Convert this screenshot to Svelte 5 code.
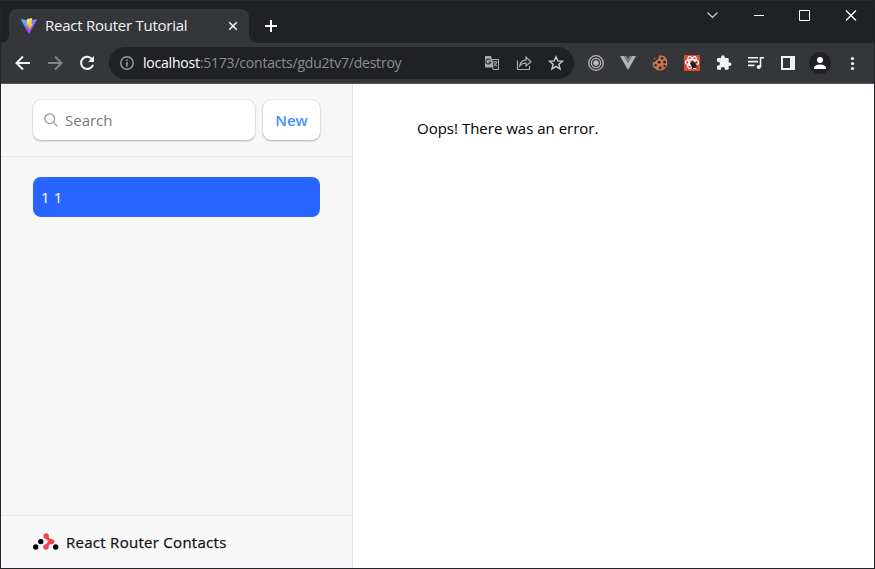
<script>
  const ink = '#f1f3f4';
  const gray = '#a9abae';
</script>

<div class="window">
  <header class="titlebar">
    <div class="tab">
      <svg class="vite" width="18" height="18" viewBox="0 0 18 18">
        <defs>
          <linearGradient id="shield" x1="0" y1="0" x2="0.6" y2="1"><stop offset="0" stop-color="#41c8ff" /><stop offset="1" stop-color="#b52bff" /></linearGradient>
          <linearGradient id="bolt" x1="0" y1="0" x2="0" y2="1"><stop offset="0" stop-color="#ffe45c" /><stop offset="1" stop-color="#ffa800" /></linearGradient>
        </defs>
        <path d="M1.6 2.2Q.6 2 1.1 3L8.5 16.4Q9 17.2 9.5 16.4L16.9 3Q17.3 2 16.3 2.2L9 3.5Z" fill="url(#shield)" />
        <path d="M12.3 1 7 2 6.6 8.3 8.4 8 7.9 10.7 9.4 10.3 8.9 14.1 13 6.4 11.2 6.7Z" fill="url(#bolt)" />
      </svg>
      <span class="title">React Router Tutorial</span>
      <svg class="close" width="10" height="10" viewBox="0 0 10 10" stroke={ink} stroke-width="1.6"><path d="M1.2 1.2 8.8 8.8M8.8 1.2 1.2 8.8" /></svg>
    </div>
    <svg class="plus" width="12" height="12" viewBox="0 0 12 12" stroke="#fff" stroke-width="2"><path d="M6 0V12M0 6H12" /></svg>
    <div class="controls">
      <svg width="46" height="28" viewBox="0 1 46 28"><path d="M17.5 12.5 22.5 17.5 27.5 12.5" stroke="#d4d5d6" stroke-width="1.1" /></svg>
      <svg width="46" height="28" viewBox="0 1 46 28"><path d="M18 15.5H28" stroke="#fff" /></svg>
      <svg width="46" height="28" viewBox="0 1 46 28"><path d="M17.5 10.5H27.5V20.5H17.5Z" stroke="#fff" /></svg>
      <svg width="46" height="28" viewBox="0 1 46 28"><path d="M18 10.5 28 20.5M28 10.5 18 20.5" stroke="#fff" stroke-width="1.3" /></svg>
    </div>
  </header>

  <nav class="toolbar">
    <div class="icons">
      <svg viewBox="0 0 32 32" stroke={ink} stroke-width="2"><path d="M23 16H10.5M16 9.5 9.5 16 16 22.5" /></svg>
      <svg viewBox="0 0 32 32" stroke="#828387" stroke-width="2"><path d="M9 16H21.5M16 9.5 22.5 16 16 22.5" /></svg>
      <svg viewBox="0 0 32 32"><path d="M21.2 12.4A6.1 6.1 0 1 0 22 17.7" stroke={ink} stroke-width="2" /><path d="M23 9V15H17Z" fill={ink} /></svg>
    </div>
    <div class="address">
      <svg class="info" width="14" height="14" viewBox="0 0 14 14"><circle cx="7" cy="7" r="6.2" stroke="#9a9c9f" stroke-width="1.4" /><path d="M7 6V10.5M7 3.4V4.9" stroke="#9a9c9f" stroke-width="1.6" /></svg>
      <span class="url"><b>localhost</b>:5173/contacts/gdu2tv7/destroy</span>
      <div class="icons actions">
        <svg viewBox="0 0 32 32"><path d="M9 9H15L16 12H23V23H17L16 20.5H9Z" fill={gray} /><path d="M16.5 13H22V22H18L16.3 20.5H17.5Z" fill="#292a2d" /><path d="M14.5 13.2A2.5 2.5 0 1 0 14.8 15.2H12.6" stroke="#292a2d" stroke-width="1.1" /><path d="M17 15H21.5M19.3 14V15M20.6 15Q20 18 18 19M18 16.2Q19 18.2 21 19" stroke={gray} /></svg>
        <svg viewBox="0 0 32 32" stroke={gray} stroke-width="1.2"><path d="M9.5 13.5V22.5H21.5V19" /><path d="M11.8 18.8Q12.5 13.3 18 13.2V10.2L23 14.8 18 19V16.2Q14 16 11.8 18.8Z" /></svg>
        <svg viewBox="0 0 32 32"><path d="M16 9.8 17.8 13.9 22.4 14.3 18.9 17.2 20 21.8 16 19.3 12 21.8 13.1 17.2 9.6 14.3 14.2 13.9Z" stroke="#c4c5c7" stroke-width="1.5" /></svg>
      </div>
    </div>
    <div class="icons extensions">
      <svg viewBox="0 0 32 32" stroke="#b8b8b8" stroke-width="1.3"><circle cx="16" cy="16" r="7.3" /><circle cx="16" cy="16" r="4.6" /><circle cx="16" cy="16" r="2.1" fill="#c8c8c8" /></svg>
      <svg viewBox="0 0 32 32"><path d="M8 9H12L16 16 20 9H24L16 23Z" fill="#b4b5b6" /><path d="M12 9H14.5L16 11.5 17.5 9H20L16 16Z" fill="#7b7c7d" /></svg>
      <svg viewBox="0 0 32 32"><path d="M15 8.6Q21.5 8 23 13Q24.5 20 19 23Q12.5 25 9.2 19.4Q8.2 17 9 15Q11.8 15.7 12 13.2Q15 13 15 8.6Z" fill="#c8794b" /><g fill="#292a2d"><circle cx="18" cy="11.3" r="1.4" /><circle cx="15.2" cy="15.3" r="1.5" /><circle cx="20.5" cy="15" r="1.5" /><circle cx="11.6" cy="18.3" r="1.3" /><circle cx="16.2" cy="20.8" r="1.5" /><circle cx="20.5" cy="19" r="1.3" /></g><circle cx="10.6" cy="11.5" r=".7" fill="#c8794b" /></svg>
      <svg viewBox="0 0 32 32"><path d="M8 8H24V24H8Z" fill="#dc4c37" /><g stroke="#fff" stroke-width="1.2"><ellipse cx="16" cy="15.5" rx="6.6" ry="2.8" /><ellipse cx="16" cy="15.5" rx="6.6" ry="2.8" transform="rotate(60 16 15.5)" /><ellipse cx="16" cy="15.5" rx="6.6" ry="2.8" transform="rotate(120 16 15.5)" /></g><ellipse cx="17.8" cy="18" rx="2.5" ry="3.4" fill="#211d1d" transform="rotate(-35 17.8 18)" /><path d="M14 16.5 21.5 20.5M17 14 16.5 22M20.5 14.5 14.5 19.5" stroke="#211d1d" stroke-width=".9" /></svg>
      <svg viewBox="0 0 32 32"><path d="M21.6 15.4H20.7V12.3Q20.7 11 19.4 11H16.7V10.1A1.8 1.8 0 0 0 13.1 10.1V11H10.3Q9 11 9 12.3V14.8H9.9A2 2 0 0 1 9.9 18.8H9V21.5Q9 22.8 10.3 22.8H12.9V22A2 2 0 0 1 16.9 22V22.8H19.4Q20.7 22.8 20.7 21.5V19H21.6A1.8 1.8 0 0 0 21.6 15.4Z" fill={ink} /></svg>
      <svg viewBox="0 0 32 32" stroke={ink} stroke-width="1.6"><path d="M8 10.8H18M8 14.6H18M8 18.4H14.5M20.5 20V10.8H24" /><circle cx="18.8" cy="20" r="2.1" fill={ink} stroke="none" /></svg>
      <svg viewBox="0 0 32 32"><path d="M9 9H23V23H9ZM11 11V21H18V11Z" fill={ink} fill-rule="evenodd" /></svg>
      <svg viewBox="0 0 32 32"><circle cx="16" cy="16" r="11" fill="#202124" /><circle cx="16" cy="13" r="3" fill="#fff" /><path d="M10 22V20.5Q11 17.5 16 17.5T22 20.5V22Z" fill="#fff" /></svg>
      <svg viewBox="0 0 32 32"><circle cx="16.5" cy="11.5" r="1.6" fill={ink} /><circle cx="16.5" cy="16.5" r="1.6" fill={ink} /><circle cx="16.5" cy="21.5" r="1.6" fill={ink} /></svg>
    </div>
  </nav>

  <div class="page">
    <aside>
      <div class="top">
        <div class="search">
          <svg width="14" height="14" viewBox="0 0 14 14" stroke="#999" stroke-width="1.3"><circle cx="5.7" cy="5.7" r="4.9" /><path d="M9.2 9.2 13.4 13.4" /></svg>
          <span class="placeholder">Search</span>
        </div>
        <button><span>New</span></button>
      </div>
      <div class="contacts"><a href="#contact">1 1</a></div>
      <footer>
        <svg width="26" height="18" viewBox="0 0 26 18"><path d="M13 3.2Q14.5 6.8 18.5 8.5 14.5 10.2 13 14.3" stroke="#f44250" stroke-width="3" /><g fill="#f44250"><circle cx="13.2" cy="3" r="2.7" /><circle cx="18.5" cy="8.6" r="2.7" /><circle cx="13" cy="14" r="2.7" /></g><g fill="#000"><circle cx="2.7" cy="14" r="2.7" /><circle cx="7.8" cy="8.6" r="2.7" /><circle cx="22.7" cy="14" r="2.7" /></g></svg>
        <span>React Router Contacts</span>
      </footer>
    </aside>
    <main><p>Oops! There was an error.</p></main>
  </div>
</div>

<style>
  :global(body) { margin: 0; }
  .window, .window * { box-sizing: border-box; }
  .window { width: 875px; height: 569px; border: 1px solid #242528; border-top: 0; display: flex; flex-direction: column; overflow: hidden; background: #fff; font-family: "Open Sans", "Noto Sans", sans-serif; font-size: 15px; line-height: 24px; white-space: nowrap; }
  svg { display: block; flex: none; fill: none; }
  .titlebar { height: 43px; flex: none; display: flex; background: #202124; border-top: 1px solid #292b2a; }
  .tab { position: relative; width: 240px; height: 34px; margin: 8px 0 0 8px; padding: 0 11px; display: flex; align-items: center; background: #35363a; border-radius: 8px 8px 0 0; color: #f4f5f5; }
  .tab::before, .tab::after { content: ""; position: absolute; bottom: 0; width: 8px; height: 8px; }
  .tab::before { left: -8px; background: radial-gradient(circle at 0 0, #202124 7.5px, #35363a 8px); }
  .tab::after { right: -8px; background: radial-gradient(circle at 100% 0, #202124 7.5px, #35363a 8px); }
  .title { margin-left: 7px; padding-bottom: 2px; letter-spacing: -.25px; }
  .close { margin-left: auto; }
  .plus { margin: 19px 0 0 16px; }
  .controls { display: flex; margin-left: auto; }
  .toolbar { height: 41px; flex: none; display: flex; align-items: center; padding: 0 6px; background: #35363a; border-bottom: 1px solid #56575b; }
  .icons { display: flex; }
  .icons svg { width: 32px; height: 32px; }
  .address { width: 465px; height: 32px; margin-left: 6px; padding: 0 2px 0 11px; display: flex; align-items: center; background: #202124; border-radius: 16px; color: #8b8d90; font-size: 14px; }
  .url { margin-left: 9px; letter-spacing: -.21px; }
  .url b { color: #fff; font-weight: 400; }
  .actions { margin-left: auto; }
  .extensions { margin-left: 6px; }
  .page { flex: 1; min-height: 0; display: flex; }
  aside { width: 352px; flex: none; display: flex; flex-direction: column; background: #f7f7f7; border-right: 1px solid #e2e2e2; }
  .top { height: 73px; flex: none; display: flex; gap: 8px; padding: 16px 32px; border-bottom: 1px solid #e2e2e2; }
  .search, button { height: 40px; background: #fff; border: 0; border-radius: 8px; box-shadow: 0 0 1px rgba(0,0,0,.25), 0 1px 2px rgba(0,0,0,.28); }
  .search { width: 222px; display: flex; align-items: center; padding-left: 11px; color: #777; }
  .placeholder { margin-left: 7px; }
  button { width: 57px; padding: 0; font: 600 15px/24px "Open Sans", sans-serif; color: #4a8eff; }
  .contacts { flex: 1; padding: 20px 32px; }
  .contacts a { display: block; height: 40px; padding: 8px; background: #2864ff; border-radius: 8px; color: #fff; letter-spacing: .2px; text-decoration: none; }
  footer { height: 53px; display: flex; align-items: center; padding-left: 32px; border-top: 1px solid #e2e2e2; color: #121212; font-weight: 500; }
  footer span { margin-left: 7px; letter-spacing: .28px; -webkit-text-stroke: .25px #121212; }
  main { flex: 1; padding: 32px 64px; color: #000; }
  p { margin: 0; }
</style>
